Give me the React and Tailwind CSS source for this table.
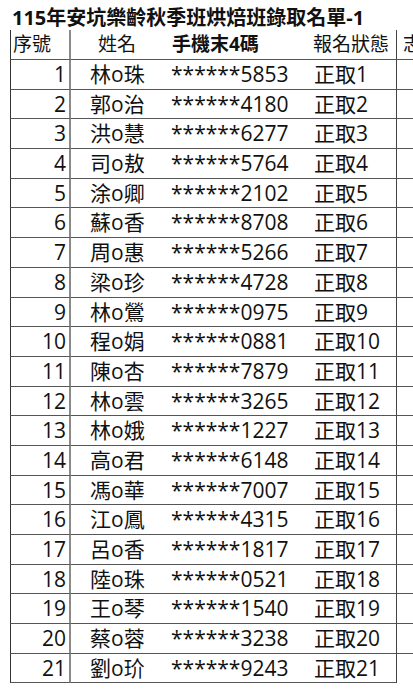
import React from "react";

const rows = [
  [1, "林o珠", "5853"],
  [2, "郭o治", "4180"],
  [3, "洪o慧", "6277"],
  [4, "司o敖", "5764"],
  [5, "涂o卿", "2102"],
  [6, "蘇o香", "8708"],
  [7, "周o惠", "5266"],
  [8, "梁o珍", "4728"],
  [9, "林o鶯", "0975"],
  [10, "程o娟", "0881"],
  [11, "陳o杏", "7879"],
  [12, "林o雲", "3265"],
  [13, "林o娥", "1227"],
  [14, "高o君", "6148"],
  [15, "馮o華", "7007"],
  [16, "江o鳳", "4315"],
  [17, "呂o香", "1817"],
  [18, "陸o珠", "0521"],
  [19, "王o琴", "1540"],
  [20, "蔡o蓉", "3238"],
  [21, "劉o玠", "9243"],
];

export default function App() {
  return (
    <div className="w-[413px] h-[700px] bg-white overflow-hidden text-[#111] font-['Open_Sans','Noto_Sans_CJK_TC',sans-serif]">
      <div className="h-[30px] pt-[6px] pl-[12px] text-[20px] leading-[24px] font-bold whitespace-nowrap">
        115年安坑樂齡秋季班烘焙班錄取名單-1
      </div>
      <div className="ml-[10px] w-[403px] flex flex-col">
        {/* header */}
        <div className="flex h-[30px] text-[19px] leading-[29px] whitespace-nowrap">
          <div className="w-[61px] shrink-0 border-l border-l-[#333] border-r-2 border-r-[#8a8a8a] border-b border-b-[#555] pl-[2px]">
            序號
          </div>
          <div className="w-[99px] shrink-0 border-b border-b-[#555] pl-[27px]">姓名</div>
          <div className="w-[143px] shrink-0 border-b border-b-[#555] pl-[2px] font-bold">手機末4碼</div>
          <div className="w-[84px] shrink-0 border-b border-b-[#555] border-r border-r-[#444] pl-[0px]">報名狀態</div>
          <div className="flex-1 border-b border-b-[#555] pl-[6px]">志</div>
        </div>
        {rows.map(([n, name, tel], i) => {
          const last = i === rows.length - 1;
          return (
            <div key={n} className="flex h-[29.7px] text-[21px] leading-[28.7px] whitespace-nowrap">
              <div className="w-[61px] shrink-0 border-l border-l-[#333] border-r-2 border-r-[#8a8a8a] border-b border-b-[#555] text-right pr-[3px]">
                {n}
              </div>
              <div className="w-[99px] shrink-0 border-b border-b-[#555] pl-[19px]">{name}</div>
              <div className="w-[143px] shrink-0 border-b border-b-[#555] pl-[1px]">{"******" + tel}</div>
              <div className="w-[84px] shrink-0 border-b border-b-[#555] border-r border-r-[#444] pl-[1px]">
                {"正取" + n}
              </div>
              <div className={last ? "flex-1" : "flex-1 border-b border-b-[#555]"}></div>
            </div>
          );
        })}
      </div>
    </div>
  );
}
